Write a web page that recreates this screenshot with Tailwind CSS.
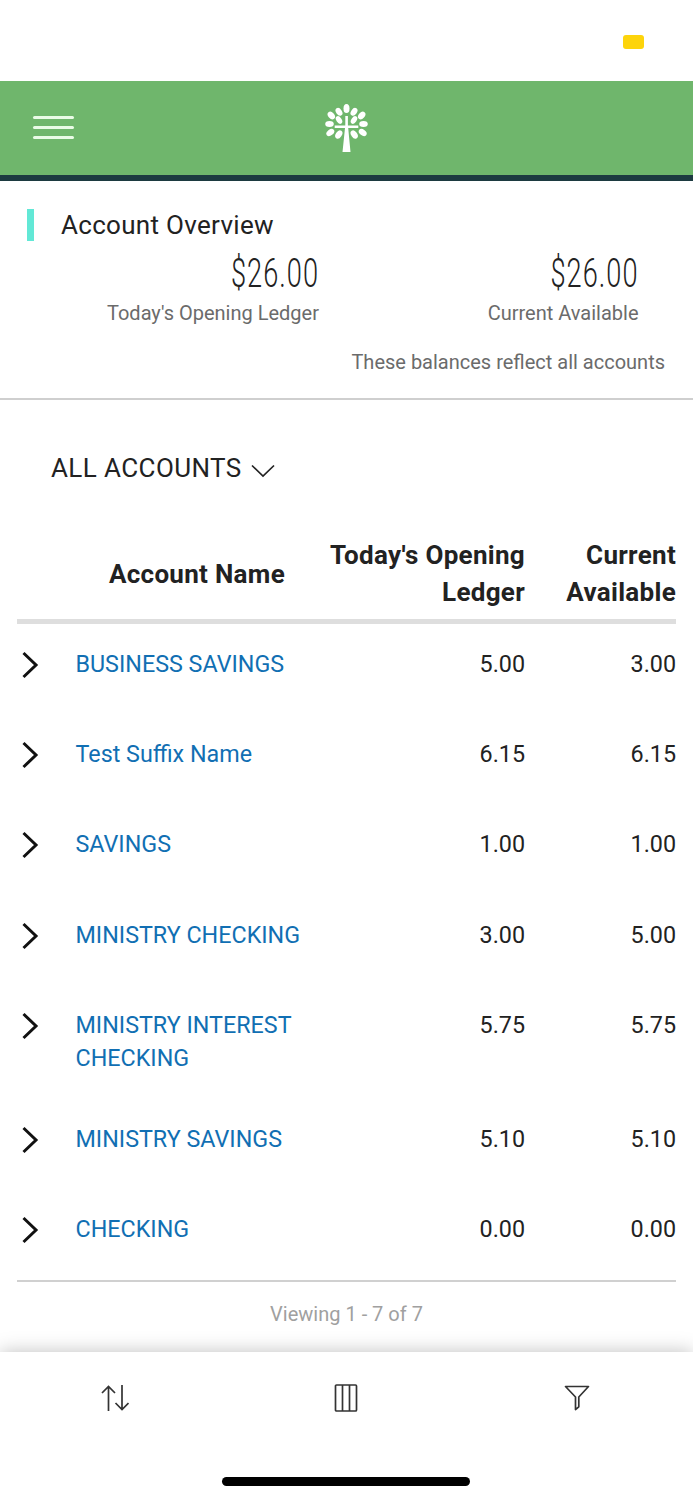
<!DOCTYPE html>
<html lang="en">
<head>
<meta charset="utf-8">
<meta name="viewport" content="width=device-width, initial-scale=1">
<title>Account Overview</title>
<script src="https://cdn.jsdelivr.net/npm/@tailwindcss/browser@4"></script>
</head>
<body class="bg-white">
<div class="flex h-[1500px] w-[693px] flex-col overflow-hidden bg-white font-['Roboto',sans-serif] text-[#222]">
  <div class="flex h-[81px] shrink-0 justify-end pt-[35px] pr-[49px]">
    <div class="h-[14px] w-[21px] rounded-[3px] bg-[#fdd40b]"></div>
  </div>
  <header class="grid h-[100px] shrink-0 grid-cols-3 items-center border-b-[6px] border-[#1c3a40] bg-[#6fb66c] pb-[1px]">
    <div class="flex w-[41px] flex-col gap-[7px] ml-[33px]">
      <span class="h-[3px] rounded-full bg-[#e9fbe6]"></span>
      <span class="h-[3px] rounded-full bg-[#e9fbe6]"></span>
      <span class="h-[3px] rounded-full bg-[#e9fbe6]"></span>
    </div>
    <svg class="mx-auto" width="44" height="50" viewBox="0.5 0 44 50" fill="#fff">
      <path d="M20.800 13h2.600v9.500h10.400v2.500H23.700L26 49h-8l2.500-24H10.200v-2.500h10.600z"/>
      <ellipse cx="22" cy="5.500" rx="3" ry="4.600"/>
      <ellipse cx="14.500" cy="8.800" rx="2.900" ry="4.300" transform="rotate(-35 14.500 8.800)"/>
      <ellipse cx="29.500" cy="8.800" rx="2.900" ry="4.300" transform="rotate(35 29.500 8.800)"/>
      <ellipse cx="6.800" cy="12.500" rx="3" ry="4.400" transform="rotate(-40 6.800 12.500)"/>
      <ellipse cx="37.200" cy="12.500" rx="3" ry="4.400" transform="rotate(40 37.200 12.500)"/>
      <ellipse cx="14.500" cy="17" rx="2.600" ry="4.200" transform="rotate(-35 14.500 17)"/>
      <ellipse cx="29.500" cy="17" rx="2.600" ry="4.200" transform="rotate(35 29.500 17)"/>
      <ellipse cx="5" cy="21" rx="4.300" ry="2.900"/>
      <ellipse cx="39" cy="21" rx="4.300" ry="2.900"/>
      <ellipse cx="5.800" cy="29.500" rx="3" ry="4.400" transform="rotate(52 5.800 29.500)"/>
      <ellipse cx="38.200" cy="29.500" rx="3" ry="4.400" transform="rotate(-52 38.200 29.500)"/>
      <ellipse cx="14.300" cy="31.500" rx="3" ry="4.500" transform="rotate(35 14.300 31.500)"/>
      <ellipse cx="29.700" cy="31.500" rx="3" ry="4.500" transform="rotate(-35 29.700 31.500)"/>
    </svg>
  </header>
  <section class="h-[219px] shrink-0 border-b-2 border-[#cfcfcf] pt-[28px]">
    <div class="flex h-[32px] items-center pl-[27px]">
      <span class="h-[32px] w-[7px] bg-[#62e8d6]"></span>
      <h1 class="ml-[27px] text-[26px] tracking-[0.300px] whitespace-nowrap">Account Overview</h1>
    </div>
    <div class="flex pt-[8px] text-right">
      <div class="w-[319px]">
        <div class="h-[48px] origin-right scale-x-[0.680] pt-[1px] text-[40px] leading-[48px] font-light tracking-[1.500px]">$26.00</div>
        <div class="text-[20px] leading-[32px] text-[#6b6b6b]">Today's Opening Ledger</div>
      </div>
      <div class="w-[319.500px]">
        <div class="h-[48px] origin-right scale-x-[0.680] pt-[1px] text-[40px] leading-[48px] font-light tracking-[1.500px]">$26.00</div>
        <div class="text-[20px] leading-[32px] text-[#6b6b6b]">Current Available</div>
      </div>
    </div>
    <p class="pt-[17px] pr-[28px] text-right text-[20px] leading-[32px] text-[#6b6b6b]">These balances reflect all accounts</p>
  </section>
  <main class="flex h-[952px] shrink-0 flex-col px-[17px] pt-[52px]">
    <div class="flex h-[32px] items-center pl-[34px]">
      <span class="text-[26px] tracking-[0.400px] whitespace-nowrap">ALL ACCOUNTS</span>
      <svg class="mt-[5px] ml-[9px]" width="24" height="14" viewBox="0 0 24 14" fill="none" stroke="#222" stroke-width="1.700"><path d="M1 1.500 12 12 23 1.500"/></svg>
    </div>
    <div class="mt-[53px] flex h-[87px] items-center border-b-[5px] border-[#dedede] pb-[8px] text-[26px] leading-[37px] font-bold tracking-[0.300px]">
      <div class="w-[268px] text-right">Account Name</div>
      <div class="w-[240px] text-right">Today's Opening<br>Ledger</div>
      <div class="w-[151px] text-right">Current<br>Available</div>
    </div>
    <div id="rows" class="border-b-2 border-[#d0d0d0] text-[23.300px] leading-[33.300px]"></div>
    <div class="pt-[16px] text-center text-[20px] leading-[32px] text-[#a0a0a0]">Viewing 1 - 7 of 7</div>
  </main>
  <footer class="relative flex grow flex-col items-center bg-white shadow-[0_0_18px_rgba(0,0,0,0.25)]">
    <div class="grid h-[91px] w-full grid-cols-3 items-center justify-items-center pr-[1px]">
      <svg width="28" height="28" viewBox="0 0 28 28" fill="none" stroke="#333" stroke-width="1.700"><path d="M7.500 27V3M1 9l6.500-6.500L14 9M21 1v24M14.500 19l6.500 6.500 6.500-6.500"/></svg>
      <svg width="24" height="28" viewBox="0 0 24 28" fill="none" stroke="#333" stroke-width="1.700"><rect x="1.500" y="1" width="21" height="26" rx="1"/><path d="M8.500 1v26M15.500 1v26"/></svg>
      <svg width="26" height="28" viewBox="0 0 26 28" fill="none" stroke="#333" stroke-width="1.700" stroke-linejoin="round"><path d="M1.500 2.500h23L14.800 13v9.800l-3.300 2.700V13z"/></svg>
    </div>
    <div class="mt-[34px] mr-[1px] h-[9px] w-[248px] rounded-full bg-black"></div>
  </footer>
</div>
<script>
const accounts = [
  ["BUSINESS SAVINGS", "5.00", "3.00"],
  ["Test Suffix Name", "6.15", "6.15"],
  ["SAVINGS", "1.00", "1.00"],
  ["MINISTRY CHECKING", "3.00", "5.00"],
  ["MINISTRY INTEREST<br>CHECKING", "5.75", "5.75"],
  ["MINISTRY SAVINGS", "5.10", "5.10"],
  ["CHECKING", "0.00", "0.00"]
];
document.getElementById("rows").innerHTML = accounts.map(([name, ledger, available]) => `
  <div class="flex min-h-[90.400px] items-start pt-[23.600px] pb-[23.200px]">
    <svg class="mt-[3px] ml-[5px] shrink-0" width="18" height="28" viewBox="0 0 18 28" fill="none" stroke="#111" stroke-width="3"><path d="M1.500 2 14 14 1.500 26"/></svg>
    <div class="ml-[35.500px] w-[249.500px] whitespace-nowrap text-[#116fb3]">${name}</div>
    <div class="w-[200px] text-right">${ledger}</div>
    <div class="w-[151px] text-right">${available}</div>
  </div>`).join("");
</script>
</body>
</html>
